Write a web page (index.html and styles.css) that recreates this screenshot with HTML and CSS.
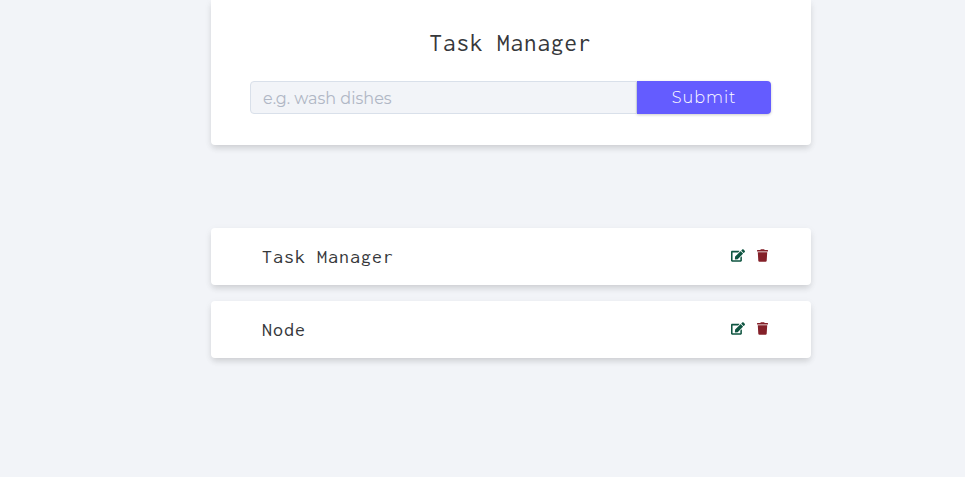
FILE: index.html
```html
<!DOCTYPE html>
<html lang="en">
<head>
<meta charset="utf-8">
<meta name="viewport" content="width=device-width, initial-scale=1">
<title>Task Manager</title>
<link rel="stylesheet" href="styles.css">
</head>
<body>
<svg class="sprite" aria-hidden="true">
  <symbol id="icon-edit" viewBox="0 0 576 512"><path d="M402.6 83.2l90.2 90.2c3.8 3.8 3.8 10 0 13.8L274.4 405.6l-92.8 10.3c-12.4 1.4-22.9-9.1-21.5-21.5l10.3-92.8L388.8 83.2c3.8-3.8 10-3.8 13.8 0zm162-22.9l-48.8-48.8c-15.2-15.2-39.9-15.2-55.2 0l-35.4 35.4c-3.8 3.8-3.8 10 0 13.8l90.2 90.2c3.8 3.8 10 3.8 13.8 0l35.4-35.4c15.2-15.3 15.2-40 0-55.2zM384 346.2V448H64V128h229.8c3.2 0 6.2-1.3 8.5-3.5l40-40c7.6-7.6 2.2-20.5-8.5-20.5H48C21.5 64 0 85.5 0 112v352c0 26.5 21.5 48 48 48h352c26.5 0 48-21.5 48-48V306.2c0-10.7-12.9-16-20.5-8.5l-40 40c-2.2 2.3-3.5 5.3-3.5 8.5z"/></symbol>
  <symbol id="icon-trash" viewBox="0 0 448 512"><path d="M432 32H312l-9.4-18.7A24 24 0 0 0 281.1 0H166.8a23.72 23.72 0 0 0-21.4 13.3L136 32H16A16 16 0 0 0 0 48v32a16 16 0 0 0 16 16h416a16 16 0 0 0 16-16V48a16 16 0 0 0-16-16zM53.2 467a48 48 0 0 0 47.9 45h245.8a48 48 0 0 0 47.9-45L416 128H32z"/></symbol>
</svg>
<main class="page">
  <form class="card task-form">
    <h1 class="title">Task Manager</h1>
    <div class="form-control">
      <input class="task-input" type="text" name="name" placeholder="e.g. wash dishes" aria-label="Task name">
      <button class="submit-btn" type="submit">Submit</button>
    </div>
  </form>
  <section class="tasks">
    <article class="card task">
      <h2 class="task-name">Task Manager</h2>
      <div class="task-links">
        <a class="edit-link" href="#edit" aria-label="Edit Task Manager"><svg class="icon-edit"><use href="#icon-edit"/></svg></a>
        <button class="delete-btn" type="button" aria-label="Delete Task Manager"><svg class="icon-trash"><use href="#icon-trash"/></svg></button>
      </div>
    </article>
    <article class="card task">
      <h2 class="task-name">Node</h2>
      <div class="task-links">
        <a class="edit-link" href="#edit" aria-label="Edit Node"><svg class="icon-edit"><use href="#icon-edit"/></svg></a>
        <button class="delete-btn" type="button" aria-label="Delete Node"><svg class="icon-trash"><use href="#icon-trash"/></svg></button>
      </div>
    </article>
  </section>
</main>
</body>
</html>
```
FILE: styles.css
```css
*,
*::before,
*::after {
  box-sizing: border-box;
}

body {
  margin: 0;
  background: #f2f4f8;
  color: #36383b;
  font-family: Montserrat, Inter, sans-serif;
}

.sprite {
  display: none;
}

.page {
  display: grid;
  grid-template-columns: minmax(0, 600px);
  justify-content: center;
  padding-bottom: 32px;
}

@media (min-width: 800px) {
  .page {
    padding-left: 57px;
  }
}

.card {
  background: #fff;
  border-radius: 4px;
  box-shadow: 0 4px 6px -1px rgba(0, 0, 0, 0.12), 0 2px 8px rgba(0, 0, 0, 0.05);
}

.task-form {
  padding: 28px 40px 31px 39px;
  border-radius: 0 0 4px 4px;
}

.title,
.task-name {
  margin: 0;
  font-family: Inconsolata, "Liberation Mono", monospace;
  font-weight: 400;
  letter-spacing: 1px;
}

.title {
  margin-bottom: 23px;
  font-size: 25px;
  line-height: 30px;
  text-align: center;
}

.form-control {
  display: flex;
}

.task-input {
  flex: 1;
  min-width: 0;
  height: 33px;
  padding: 1px 12px 0;
  border: 1px solid #d9e0ea;
  border-radius: 4px 0 0 4px;
  background: #f2f4f8;
  color: inherit;
  font: inherit;
  font-size: 16px;
}

.task-input::placeholder {
  color: #b0b7c5;
}

.submit-btn {
  flex: 0 0 134px;
  height: 33px;
  padding: 0;
  border: 0;
  border-radius: 0 4px 4px 0;
  background: #645cff;
  box-shadow: 0 1px 3px rgba(0, 0, 0, 0.2);
  color: #fff;
  font: inherit;
  font-size: 16px;
  font-weight: 300;
  letter-spacing: 1px;
  cursor: pointer;
}

.tasks {
  display: grid;
  gap: 16px;
  margin-top: 83px;
}

.task {
  display: flex;
  align-items: center;
  justify-content: space-between;
  padding: 16px 43px 16px 51px;
}

.task-name {
  font-size: 20px;
  line-height: 25px;
}

.task-links {
  display: flex;
  align-items: center;
  gap: 12px;
}

.edit-link,
.delete-btn {
  display: block;
  padding: 0;
  border: 0;
  background: none;
  cursor: pointer;
}

.edit-link {
  color: #0f5541;
}

.delete-btn {
  color: #842029;
}

.icon-edit,
.icon-trash {
  display: block;
  width: 14px;
  height: 13px;
  margin-bottom: 3px;
  fill: currentColor;
}

.icon-trash {
  width: 11px;
}
```
